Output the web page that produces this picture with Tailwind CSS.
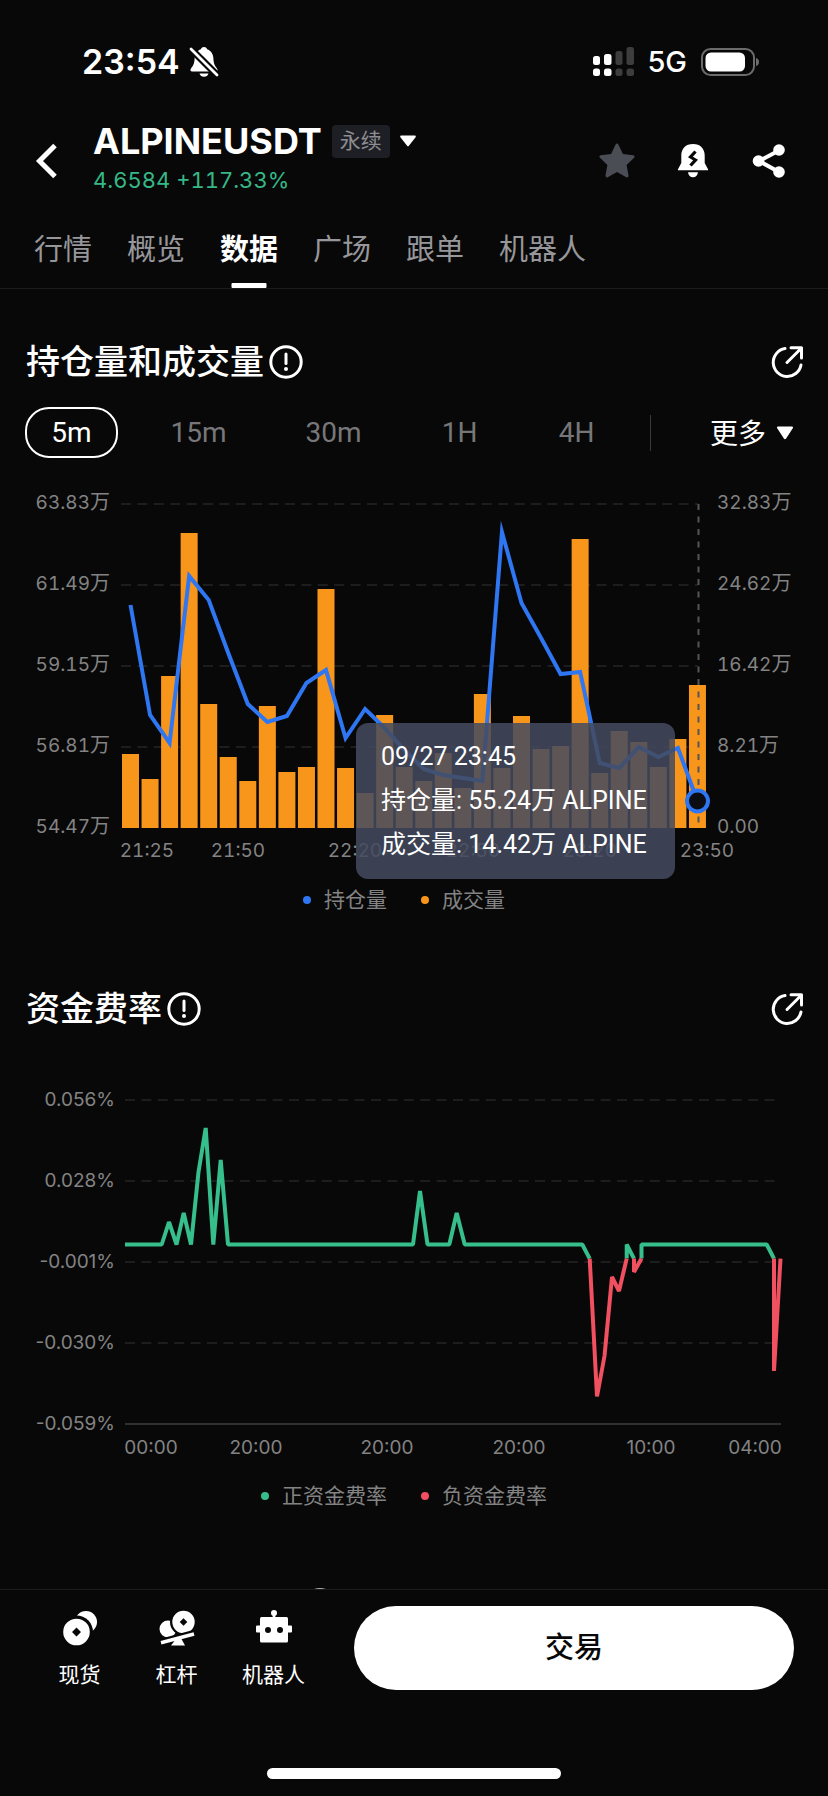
<!DOCTYPE html>
<html lang="zh-CN">
<head>
<meta charset="utf-8">
<meta name="viewport" content="width=device-width, initial-scale=1">
<title>ALPINEUSDT 永续</title>
<script src="https://cdn.jsdelivr.net/npm/@tailwindcss/browser@4"></script>
</head>
<body class="min-h-screen flex flex-col bg-[#080808] text-white font-['Inter','Noto_Sans_CJK_SC',sans-serif]">

<!-- Status bar -->
<div class="flex items-center justify-between pt-[42px] pl-[82px] pr-[68px]">
  <div class="flex items-center gap-[9px]">
    <span class="text-[34px] leading-10 font-semibold">23:54</span>
    <svg class="w-[30px] h-8" viewBox="0 0 30 32" fill="#fff" aria-hidden="true">
      <path d="M15 1c-1.900 0-2.900 1-3.100 2.300C8 4.700 5.800 8 5.600 12.500 5.400 18 4 20 2 22.400 1 23.700 1.300 25.500 3.200 25.500h23.600c1.900 0 2.200-1.800 1.200-3.100-2-2.400-3.400-4.400-3.600-9.900C24.200 8 22 4.700 18.100 3.300 17.900 2 16.900 1 15 1zM10.500 27.500h9c-.5 2-2.300 3.300-4.500 3.300s-4-1.300-4.500-3.300z"/>
      <path d="M1 2 29 30" stroke="#080808" stroke-width="7"/>
      <path d="M2 3 28 29" stroke="#fff" stroke-width="2.800" stroke-linecap="round"/>
    </svg>
  </div>
  <div class="flex items-center gap-3">
    <svg class="w-[42px] h-[30px]" viewBox="0 0 42 30" aria-hidden="true">
      <g fill="#fff"><rect y="9" width="7" height="9" rx="2.500"/><rect y="21.500" width="7" height="7.500" rx="2.500"/><rect x="11" y="7" width="7.500" height="11" rx="2.500"/><rect x="11" y="21.500" width="7.500" height="7.500" rx="2.500"/></g>
      <g fill="#3d3d3d"><rect x="22.500" y="4" width="7" height="14" rx="2.500"/><rect x="22.500" y="21.500" width="7" height="7.500" rx="2.500"/><rect x="33.500" width="7.500" height="18" rx="2.500"/><rect x="33.500" y="21.500" width="7.500" height="7.500" rx="2.500"/></g>
    </svg>
    <span class="text-[29px] leading-10 font-medium">5G</span>
    <svg class="ml-[2px] w-[59px] h-7" viewBox="0 0 59 28" aria-hidden="true">
      <rect x="1" y="1" width="52" height="26" rx="8.500" fill="none" stroke="#6b6b6b" stroke-width="2"/>
      <rect x="4.500" y="4.500" width="39.500" height="19" rx="5.500" fill="#fff"/>
      <path d="M55 10c2 .6 3 2 3 4s-1 3.400-3 4z" fill="#6b6b6b"/>
    </svg>
  </div>
</div>

<!-- Symbol header -->
<header class="flex items-center mt-[39px] pl-[34px] pr-[41px]">
  <button type="button" aria-label="返回" class="w-[59px]">
    <svg class="w-6 h-9" viewBox="0 0 24 36" fill="none" stroke="#fff" stroke-width="5"><path d="M21 2.500 5.500 18 21 33.500"/></svg>
  </button>
  <div class="flex-1 pb-[6px]">
    <button type="button" class="flex items-center">
      <span class="text-[36px] leading-10 font-bold">ALPINEUSDT</span>
      <span class="ml-[10px] px-2 h-[33px] leading-[31px] rounded bg-[#1e1f24] text-[21px] text-[#8d8d92]">永续</span>
      <svg class="ml-[10px] w-4 h-3" viewBox="0 0 16 12" fill="#fff" aria-hidden="true"><path d="M1.200.5h13.600c.9 0 1.300 1 .8 1.700L8.900 10.800c-.5.700-1.300.7-1.800 0L.4 2.200C-.1 1.500.3.500 1.200.5z"/></svg>
    </button>
    <p class="mt-[5px] text-[22px] leading-7 tabular-nums text-[#35b886]">4.6584 +117.33%</p>
  </div>
  <div class="flex items-center gap-10">
    <button type="button" aria-label="收藏">
      <svg class="w-9 h-9" viewBox="0 0 36 36" fill="#4b4d55"><path d="M16.600 1.500c.6-1.200 2.200-1.200 2.800 0l4.500 9.400 10.300 1.300c1.300.2 1.800 1.700.9 2.600l-7.500 7.200 1.900 10.600c.2 1.300-1.100 2.200-2.200 1.600L18 29.100l-9.300 5.100c-1.100.6-2.400-.3-2.200-1.600L8.400 22 .9 14.800c-.9-.9-.4-2.400.9-2.600l10.300-1.300z"/></svg>
    </button>
    <button type="button" aria-label="提醒">
      <svg class="w-9 h-9" viewBox="0 0 36 36" fill="#fff"><path d="M18 1C10.500 1 6.300 5.800 6.300 12.500V20L3 26.200c-.3.600 0 1.100.6 1.100h28.800c.6 0 .9-.5.6-1.100L29.700 20v-7.500C29.700 5.800 25.500 1 18 1zM13 29.300h10c-.3 3-2.400 5-5 5s-4.700-2-5-5z"/><path d="m20.500 8.500-5 5.500 5 3-5 5.500" fill="none" stroke="#080808" stroke-width="3.200"/></svg>
    </button>
    <button type="button" aria-label="分享">
      <svg class="w-9 h-9" viewBox="0 0 36 36" fill="#fff"><path d="M28 7.500 8 18l20 11" fill="none" stroke="#fff" stroke-width="4"/><circle cx="28" cy="7" r="5.800"/><circle cx="28" cy="29" r="5.800"/><circle cx="7.500" cy="18" r="5.800"/></svg>
    </button>
  </div>
</header>

<!-- Tabs -->
<nav class="flex gap-[35px] pt-7 pl-[34px] border-b border-[#1c1c1c] text-[29px] leading-[44px] text-[#97979b]">
  <a href="#" class="pb-4">行情</a>
  <a href="#" class="pb-4">概览</a>
  <a href="#" aria-current="page" class="relative pb-4 font-bold text-white">数据<span class="absolute bottom-0 left-1/2 -translate-x-1/2 w-[35px] h-[5px] rounded-[1px] bg-white"></span></a>
  <a href="#" class="pb-4">广场</a>
  <a href="#" class="pb-4">跟单</a>
  <a href="#" class="pb-4">机器人</a>
</nav>

<main class="flex-1 flex flex-col">
  <!-- Open interest and volume -->
  <section>
    <div class="flex items-center pt-[53px] pl-[26px] pr-6">
      <h2 class="text-[34px] leading-10 font-medium">持仓量和成交量</h2>
      <button type="button" aria-label="说明" class="ml-[5px]">
        <svg class="w-[34px] h-[34px]" viewBox="0 0 34 34" fill="none" stroke="#fff" stroke-width="3"><circle cx="17" cy="17" r="15.200"/><path d="M17 9v9.500" stroke-linecap="round"/><circle cx="17" cy="24" r="2" fill="#fff" stroke="none"/></svg>
      </button>
      <button type="button" aria-label="展开" class="ml-auto">
        <svg class="w-[34px] h-[34px]" viewBox="0 0 34 34" fill="none" stroke="#fff" stroke-width="3" stroke-linecap="round" stroke-linejoin="round"><path d="M15 3.600A14 14 0 1 0 31 20"/><path d="M17 17.500 31 3.500M21 2.800h10.500V13"/></svg>
      </button>
    </div>

    <div class="flex items-center justify-between mt-[25px] pl-[25px] pr-[34px] text-[28px]">
      <div class="flex gap-[26px] font-['Roboto','Noto_Sans_CJK_SC',sans-serif] text-[#77777a]">
        <button type="button" aria-pressed="true" class="h-[51px] w-[93px] rounded-3xl border-2 border-white leading-[47px] text-white">5m</button>
        <button type="button" class="h-[51px] w-[109px] leading-[51px]">15m</button>
        <button type="button" class="h-[51px] w-[109px] leading-[51px]">30m</button>
        <button type="button" class="h-[51px] w-[91px] leading-[51px]">1H</button>
        <button type="button" class="h-[51px] w-[91px] leading-[51px]">4H</button>
      </div>
      <span class="w-px h-9 bg-[#3a3a3a]"></span>
      <button type="button" class="flex items-center gap-[10px] ml-[30px] font-['Noto_Sans_CJK_SC',sans-serif] leading-[51px]">更多
        <svg class="w-[18px] h-[14px]" viewBox="0 0 18 14" fill="#fff" aria-hidden="true"><path d="M2 .5h14c.9 0 1.400 1 .8 1.800L10.100 12.500c-.6.900-1.600.9-2.200 0L1.200 2.300C.6 1.500 1.100.5 2 .5z"/></svg>
      </button>
    </div>

    <div class="relative mt-3">
      <svg id="oi" class="w-full h-auto tabular-nums" viewBox="0 0 828 410" role="img" aria-label="持仓量和成交量图表" font-size="19" fill="#838383">
        <path d="M121 34H698M121 115H698M121 196H698M121 277H698" stroke="#1d1d1d" stroke-width="2" stroke-dasharray="10 6.400" fill="none"/>
        <g text-anchor="end"><text x="110" y="39">63.83<tspan font-size="20">万</tspan></text><text x="110" y="120">61.49<tspan font-size="20">万</tspan></text><text x="110" y="201">59.15<tspan font-size="20">万</tspan></text><text x="110" y="282">56.81<tspan font-size="20">万</tspan></text><text x="110" y="363">54.47<tspan font-size="20">万</tspan></text></g>
        <g><text x="717" y="39">32.83<tspan font-size="20">万</tspan></text><text x="717" y="120">24.62<tspan font-size="20">万</tspan></text><text x="717" y="201">16.42<tspan font-size="20">万</tspan></text><text x="717" y="282">8.21<tspan font-size="20">万</tspan></text><text x="717" y="363">0.00</text></g>
        <g text-anchor="middle"><text x="147" y="387">21:25</text><text x="238" y="387">21:50</text><text x="355" y="387">22:20</text><text x="473" y="387">22:50</text><text x="590" y="387">23:20</text><text x="707" y="387">23:50</text></g>
        <g id="bars" fill="#f8961c"></g>
        <path d="M698.500 34V358" stroke="#555" stroke-width="2" stroke-dasharray="6 6.500" fill="none"/>
        <polyline id="line" fill="none" stroke="#2f76f2" stroke-width="4" stroke-miterlimit="12"/>
        <circle cx="697.500" cy="331" r="10.500" fill="#0b0d12" stroke="#2f76f2" stroke-width="4"/>
      </svg>
      <div class="absolute left-[43%] top-[253px] pl-[25px] pr-7 py-3 rounded-xl bg-[#434b5f]/86 font-['Roboto','Noto_Sans_CJK_SC',sans-serif] text-[25px] leading-[44px] whitespace-nowrap">
        <p>09/27 23:45</p>
        <p>持仓量: 55.24万 ALPINE</p>
        <p>成交量: 14.42万 ALPINE</p>
      </div>
    </div>

    <div class="flex justify-center gap-[34px] mt-[6px] pr-5 text-[21px] leading-7 text-[#838383]">
      <span class="flex items-center gap-[13px]"><i class="size-2 rounded-full bg-[#2f76f2]"></i>持仓量</span>
      <span class="flex items-center gap-[13px]"><i class="size-2 rounded-full bg-[#f8961c]"></i>成交量</span>
    </div>
  </section>

  <!-- Funding rate -->
  <section>
    <div class="flex items-center pt-[75px] pl-[26px] pr-6">
      <h2 class="text-[34px] leading-10 font-medium">资金费率</h2>
      <button type="button" aria-label="说明" class="ml-[5px]">
        <svg class="w-[34px] h-[34px]" viewBox="0 0 34 34" fill="none" stroke="#fff" stroke-width="3"><circle cx="17" cy="17" r="15.200"/><path d="M17 9v9.500" stroke-linecap="round"/><circle cx="17" cy="24" r="2" fill="#fff" stroke="none"/></svg>
      </button>
      <button type="button" aria-label="展开" class="ml-auto">
        <svg class="w-[34px] h-[34px]" viewBox="0 0 34 34" fill="none" stroke="#fff" stroke-width="3" stroke-linecap="round" stroke-linejoin="round"><path d="M15 3.600A14 14 0 1 0 31 20"/><path d="M17 17.500 31 3.500M21 2.800h10.500V13"/></svg>
      </button>
    </div>

    <svg class="w-full h-auto mt-[51px]" viewBox="0 0 828 390" role="img" aria-label="资金费率图表" font-size="19" fill="#838383">
      <path d="M125 20H781M125 101H781M125 182H781M125 263H781" stroke="#1d1d1d" stroke-width="2" stroke-dasharray="10 6.400" fill="none"/>
      <path d="M125 344H781" stroke="#303030" stroke-width="2"/>
      <g text-anchor="end"><text x="115" y="26">0.056%</text><text x="115" y="107">0.028%</text><text x="115" y="188">-0.001%</text><text x="115" y="269">-0.030%</text><text x="115" y="350">-0.059%</text></g>
      <g text-anchor="middle"><text x="151" y="374">00:00</text><text x="256" y="374">20:00</text><text x="387" y="374">20:00</text><text x="519" y="374">20:00</text><text x="651" y="374">10:00</text><text x="755" y="374">04:00</text></g>
      <g fill="none" stroke-width="4" stroke-linejoin="bevel">
        <g stroke="#36be8c"><path d="M125 164.500H161.700L169 142 176.500 164.500 183.700 133 191 164.500 198.500 92 205.700 48 213.300 164.500 220.700 80 228 164.500H413L420 111 427.500 164.500H449.300L456.700 133 464.700 164.500H582.300L589.700 178.600"/><path d="M626.700 178.600V164.500L634 178.600"/><path d="M641.500 178.600V164.500H766.700L774 178.600"/></g>
        <g stroke="#f0505f"><path d="M589.700 178.600 597 316.500 604.500 276 612 197 619 211 626.700 178.600"/><path d="M634 178.600V192L641.500 178.600"/><path d="M774 178.600V291L780.500 178.600"/></g>
      </g>
    </svg>

    <div class="flex justify-center gap-[34px] mt-3 pr-5 text-[21px] leading-7 text-[#838383]">
      <span class="flex items-center gap-[13px]"><i class="size-2 rounded-full bg-[#36be8c]"></i>正资金费率</span>
      <span class="flex items-center gap-[13px]"><i class="size-2 rounded-full bg-[#f0505f]"></i>负资金费率</span>
    </div>
  </section>

  <!-- Top edge of the next section's info icon, cut off by the bottom bar -->
  <div class="mt-auto ml-[303px] h-px w-[34px] overflow-hidden" aria-hidden="true">
    <svg class="w-[34px] h-[34px]" viewBox="0 0 34 34" fill="none" stroke="#aaa" stroke-width="3"><circle cx="17" cy="17" r="15.500"/></svg>
  </div>
</main>

<!-- Bottom bar -->
<footer class="border-t border-[#1c1c1c] pb-[17px]">
  <div class="flex pt-4 pl-[31px] pr-[34px]">
    <a href="#" class="w-[97px] pt-1 flex flex-col items-center gap-[15px] text-[21px] leading-7">
      <svg class="w-9 h-9" viewBox="0 0 36 36" fill="#fff" aria-hidden="true"><circle cx="24" cy="12" r="11"/><circle cx="14.500" cy="22" r="16.500" fill="#080808"/><path fill-rule="evenodd" d="M14.500 8.700a13.300 13.300 0 1 0 0 26.600 13.300 13.300 0 0 0 0-26.600zm0 8.800 4.500 4.500-4.500 4.500L10 22z"/></svg>
      现货</a>
    <a href="#" class="w-[97px] pt-1 flex flex-col items-center gap-[15px] text-[21px] leading-7">
      <svg class="w-9 h-9" viewBox="0 0 36 36" fill="#fff" aria-hidden="true"><circle cx="9" cy="19" r="8.500"/><circle cx="24.500" cy="12" r="13.500" fill="#080808"/><path fill-rule="evenodd" d="M24.500.8a11.200 11.200 0 1 0 0 22.400 11.200 11.200 0 0 0 0-22.400zm0 7.400 3.800 3.800-3.800 3.800-3.800-3.800z"/><path d="M1.500 32.500 35 23.500" stroke="#080808" stroke-width="7"/><path d="M2 32.800 35 24" stroke="#fff" stroke-width="3.500"/><path d="M17 29h5.500l3.500 6.500H12z"/></svg>
      杠杆</a>
    <a href="#" class="w-[97px] pt-1 flex flex-col items-center gap-[15px] text-[21px] leading-7">
      <svg class="w-9 h-9" viewBox="0 0 36 36" fill="#fff" aria-hidden="true"><circle cx="18" cy="3" r="3"/><path d="M16.700 3h2.600v5h-2.600z"/><rect y="15.500" width="36" height="7" rx="1"/><rect x="4" y="7" width="28" height="25.500" rx="1.500"/><g fill="#080808"><circle cx="12" cy="20" r="3"/><circle cx="24" cy="20" r="3"/></g></svg>
      机器人</a>
    <button type="button" class="flex-1 ml-8 h-[84px] rounded-full bg-white text-[#080808] text-[29px] font-medium">交易</button>
  </div>
  <div class="mx-auto mt-[78px] h-[11px] w-[294px] rounded-full bg-white"></div>
</footer>

<script>
  const ns = 'http://www.w3.org/2000/svg';
  const step = 19.55, base = 358;
  // Volume bar heights, in chart units
  const volume = [74, 49, 152, 295, 124, 71, 47, 122, 56, 61, 239, 60, 35, 113, 61, 47, 75, 40, 134, 60, 112, 79, 82, 289, 55, 97, 86, 61, 89, 143];
  // Open interest positions, in chart units
  const interest = [135, 245, 273, 106, 130, 183, 234, 252, 246, 213, 200, 268, 239, 258, 280, 299, 305, 308, 311, 62, 133, 168, 204, 202, 293, 298, 277, 287, 278, 331];
  const bars = document.getElementById('bars');
  volume.forEach((h, i) => {
    const r = document.createElementNS(ns, 'rect');
    r.setAttribute('x', 122 + i * step);
    r.setAttribute('y', base - h);
    r.setAttribute('width', 17);
    r.setAttribute('height', h);
    bars.appendChild(r);
  });
  document.getElementById('line').setAttribute('points', interest.map((y, i) => (130.5 + i * step) + ',' + y).join(' '));
</script>
</body>
</html>
